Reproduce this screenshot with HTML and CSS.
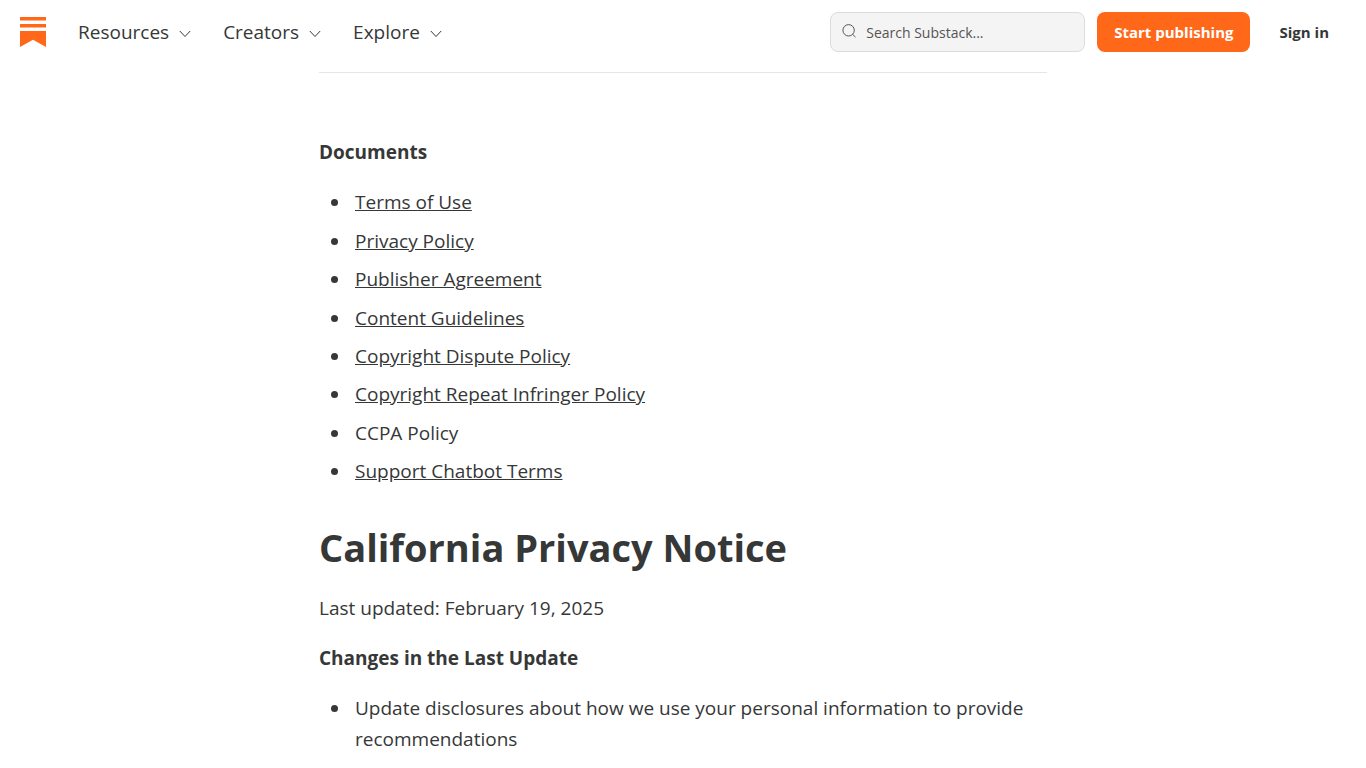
FILE: index.html
```
<!DOCTYPE html>
<html lang="en">
<head>
    <meta charset="UTF-8">
    <meta name="viewport" content="width=device-width, initial-scale=1.0">
    <title>California Privacy Notice - Substack</title>
    <link rel="stylesheet" href="styles.css">
</head>
<body>
    <header class="topbar">
        <a href="#" class="logo" aria-label="Substack">
            <svg width="26" height="30" viewBox="0 0 26 30" fill="#ff6719">
                <path d="M0 0h26v3.5H0zM0 7h26v3.5H0zM0 14h26v16L13 22.8 0 30z"/>
            </svg>
        </a>
        <nav class="menu">
            <button type="button" class="menu-button">Resources
                <svg class="chevron" width="12" height="8" viewBox="0 0 12 8"><path d="M.8 1 6 6.5 11.2 1"/></svg>
            </button>
            <button type="button" class="menu-button">Creators
                <svg class="chevron" width="12" height="8" viewBox="0 0 12 8"><path d="M.8 1 6 6.5 11.2 1"/></svg>
            </button>
            <button type="button" class="menu-button">Explore
                <svg class="chevron" width="12" height="8" viewBox="0 0 12 8"><path d="M.8 1 6 6.5 11.2 1"/></svg>
            </button>
        </nav>
        <form class="search" role="search">
            <svg class="search-icon" width="14" height="16" viewBox="0 0 14 16"><circle cx="6.6" cy="6.3" r="5.7"/><path d="m10.6 10.3 2.9 2.9"/></svg>
            <input type="text" class="search-input" placeholder="Search Substack..." aria-label="Search Substack">
        </form>
        <a href="#" class="button primary">Start publishing</a>
        <a href="#" class="button">Sign in</a>
    </header>
    <main class="content">
        <hr class="divider">
        <h4>Documents</h4>
        <ul>
            <li><a href="#">Terms of Use</a></li>
            <li><a href="#">Privacy Policy</a></li>
            <li><a href="#">Publisher Agreement</a></li>
            <li><a href="#">Content Guidelines</a></li>
            <li><a href="#">Copyright Dispute Policy</a></li>
            <li><a href="#">Copyright Repeat Infringer Policy</a></li>
            <li>CCPA Policy</li>
            <li><a href="#">Support Chatbot Terms</a></li>
        </ul>
        <h1>California Privacy Notice</h1>
        <p>Last updated: February 19, 2025</p>
        <h4>Changes in the Last Update</h4>
        <ul>
            <li>Update disclosures about how we use your personal information to provide recommendations</li>
        </ul>
    </main>
</body>
</html>
```
FILE: styles.css
```
body {
    font-family: "Open Sans", "Noto Sans", sans-serif;
    margin: 0;
    color: #363737;
    background-color: white;
}
.topbar {
    display: flex;
    align-items: center;
    height: 64px;
    padding: 0 20px;
    box-sizing: border-box;
}
.logo {
    display: flex;
}
.menu {
    display: flex;
    gap: 32px;
    margin-left: 32px;
    margin-right: auto;
}
.menu-button {
    display: flex;
    align-items: center;
    gap: 10px;
    padding: 0;
    border: none;
    background: none;
    font-family: inherit;
    font-size: 19px;
    line-height: 32px;
    color: #363737;
    cursor: pointer;
}
.chevron {
    fill: none;
    stroke: #363737;
    stroke-width: 1;
    margin-top: 4px;
}
.search {
    display: flex;
    align-items: center;
    gap: 10px;
    width: 255px;
    height: 40px;
    padding: 0 11px;
    box-sizing: border-box;
    background-color: #f4f4f4;
    border: 1px solid #dcdcdc;
    border-radius: 8px;
    margin-right: 12px;
}
.search-icon {
    flex: none;
    fill: none;
    stroke: #555;
    stroke-width: 1;
}
.search-input {
    flex: 1;
    min-width: 0;
    padding: 0;
    border: none;
    outline: none;
    background: none;
    font-family: inherit;
    font-size: 14px;
    color: #363737;
}
.search-input::placeholder {
    color: #555;
    opacity: 1;
}
.button {
    padding: 0 17px;
    border-radius: 8px;
    font-size: 15px;
    font-weight: 700;
    line-height: 40px;
    color: #363737;
    text-decoration: none;
    white-space: nowrap;
}
.primary {
    margin-right: 12px;
    background-color: #ff6719;
    color: white;
}
.content {
    max-width: 728px;
    margin: 0 auto;
    font-size: 19px;
    line-height: 1.6;
}
.divider {
    margin: 8px 0 64px;
    border: none;
    border-top: 1px solid #e6e6e6;
}
.content h1 {
    margin: 38px 0 24px;
    font-size: 38px;
    line-height: 44px;
}
.content h4 {
    margin: 0 0 20px;
    font-size: 19px;
}
.content p {
    margin: 0 0 20px;
}
.content ul {
    margin: 0;
    padding-left: 32px;
}
.content li {
    padding-left: 4px;
}
.content li + li {
    margin-top: 8px;
}
.content a {
    color: inherit;
    text-decoration: underline;
}
```
